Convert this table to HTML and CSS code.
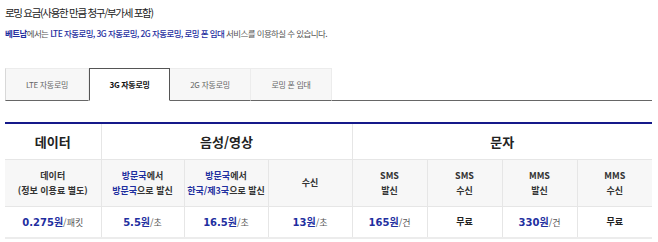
FILE: index.html
```html
<!DOCTYPE html>
<html lang="ko">
<head>
<meta charset="utf-8">
<link rel="stylesheet" href="styles.css">
</head>
<body>
<div class="page">
  <h1 class="title">로밍 요금(사용한 만큼 청구/부가세 포함)</h1>
  <p class="desc"><b class="blue">베트남</b>에서는 <span class="blue">LTE 자동로밍, 3G 자동로밍, 2G 자동로밍, 로밍 폰 임대</span> 서비스를 이용하실 수 있습니다.</p>
  <ul class="tabs">
    <li class="tab">LTE 자동로밍</li>
    <li class="tab active">3G 자동로밍</li>
    <li class="tab">2G 자동로밍</li>
    <li class="tab">로밍 폰 임대</li>
  </ul>
  <table class="rates">
    <colgroup>
      <col class="c1"><col class="c2"><col class="c3"><col class="c4">
      <col class="c5"><col class="c6"><col class="c7"><col class="c8">
    </colgroup>
    <thead>
      <tr class="group">
        <th>데이터</th>
        <th colspan="3">음성/영상</th>
        <th colspan="4" class="last">문자</th>
      </tr>
      <tr class="sub">
        <th>데이터<br>(정보 이용료 별도)</th>
        <th><span class="blue">방문국</span>에서<br><span class="blue">방문국</span>으로 발신</th>
        <th><span class="blue">방문국</span>에서<br><span class="blue">한국/제3국</span>으로 발신</th>
        <th>수신</th>
        <th>SMS<br>발신</th>
        <th>SMS<br>수신</th>
        <th>MMS<br>발신</th>
        <th class="last">MMS<br>수신</th>
      </tr>
    </thead>
    <tbody>
      <tr>
        <td><b class="num">0.275원</b>/패킷</td>
        <td><b class="num">5.5원</b>/초</td>
        <td><b class="num">16.5원</b>/초</td>
        <td><b class="num">13원</b>/초</td>
        <td><b class="num">165원</b>/건</td>
        <td><b class="free">무료</b></td>
        <td><b class="num">330원</b>/건</td>
        <td class="last"><b class="free">무료</b></td>
      </tr>
    </tbody>
  </table>
</div>
</body>
</html>
```

FILE: styles.css
```css
* { box-sizing: border-box; }
html, body { margin: 0; padding: 0; background: #fff; }
body {
  font-family: "Noto Sans CJK KR", "Noto Sans", sans-serif;
  color: #333;
}
.page { width: 652px; padding: 5px 0 0 5px; }
.title {
  margin: 0;
  font-size: 10.5px;
  line-height: 16px;
  font-weight: 400;
  color: #222;
  letter-spacing: -1.3px;
}
.desc {
  margin: 5px 0 0;
  font-size: 8.5px;
  line-height: 14px;
  color: #555;
  letter-spacing: -0.6px;
}
.blue { color: #1f2f9f; }
.desc .blue { font-weight: 500; }
.desc b.blue { font-weight: 700; }

.tabs {
  list-style: none;
  margin: 28px 0 0;
  padding: 0;
  display: flex;
  border-bottom: 1px solid #666;
  height: 33px;
}
.tab {
  width: 81px;
  height: 33px;
  margin-bottom: -1px;
  background: #f7f7f7;
  border: 1px solid #ececec;
  border-bottom: 1px solid #666;
  border-left: none;
  display: flex;
  align-items: center;
  justify-content: center;
  font-size: 8px;
  color: #666;
  letter-spacing: -0.3px;
}
.tab:first-child { width: 84px; border-left: 1px solid #d8d8d8; }
.tab.active {
  background: #fff;
  border: 1px solid #555;
  border-bottom: 1px solid #fff;
  color: #111;
  font-weight: 700;
}

.rates {
  margin-top: 21px;
  width: 647px;
  border-collapse: collapse;
  table-layout: fixed;
  border-top: 2px solid #15198a;
  border-bottom: 2px solid #ececec;
  text-align: center;
}
.c1 { width: 96px; }
.c2 { width: 83px; }
.c3 { width: 84px; }
.c4 { width: 84px; }
.c5, .c6, .c7, .c8 { width: 75px; }
.rates th, .rates td {
  padding: 0;
  border-right: 1px solid #e6e6e6;
}
.rates .last { border-right: none; }
.group th {
  height: 36px;
  font-size: 13px;
  font-weight: 700;
  color: #222;
  border-bottom: 1px solid #e6e6e6;
}
.sub th {
  height: 47px;
  background: #f7f7f7;
  font-size: 9px;
  line-height: 15px;
  font-weight: 700;
  color: #333;
  border-bottom: 1px solid #e6e6e6;
}
.rates td {
  height: 32px;
  font-size: 9px;
  color: #555;
}
.num {
  font-family: "DejaVu Sans", "Noto Sans CJK KR", sans-serif;
  font-size: 10px;
  color: #1f2f9f;
  font-weight: 700;
}
.free { color: #222; font-weight: 700; }
```
